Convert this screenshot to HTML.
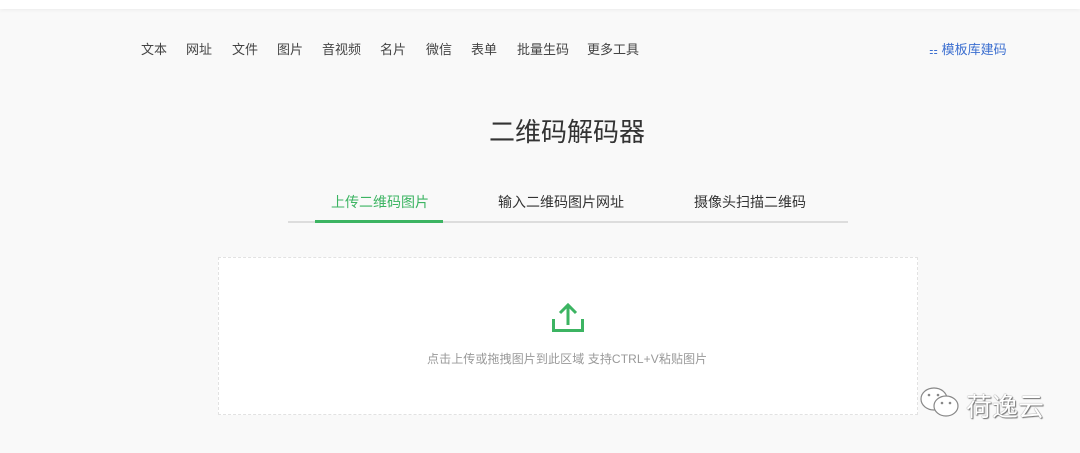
<!DOCTYPE html>
<html><head><meta charset="utf-8"><style>
*{margin:0;padding:0;box-sizing:border-box}
body{width:1080px;height:453px;background:#f9f9f9;font-family:"Liberation Sans","Noto Sans CJK SC",sans-serif;position:relative;overflow:hidden}
.top{position:absolute;left:0;top:0;width:1080px;height:9px;background:#fff;box-shadow:0 1px 4px rgba(0,0,0,.06)}
.n{position:absolute;top:39px;font-size:13px;color:#444;white-space:nowrap}
.tpl{position:absolute;top:39px;left:929px;font-size:13px;color:#3c6fd0}
h1{position:absolute;top:112px;left:489px;font-size:26px;font-weight:normal;color:#333;white-space:nowrap}
.tabs{position:absolute;left:288px;top:221px;width:560px;height:2px;background:#ddd}
.g{position:absolute;left:315px;top:220px;width:128px;height:3px;background:#3cb462}
.t{position:absolute;top:192px;font-size:14px;color:#333}
.box{position:absolute;left:218px;top:257px;width:700px;height:158px;background:#fff;border:1px dashed #e2e2e2}
.hint{position:absolute;top:350px;left:427px;font-size:12px;color:#999;letter-spacing:0.1px;white-space:nowrap}
.wm{position:absolute;left:966px;top:387px;font-size:26px;color:#fff;text-shadow:0 0 1px #555,1px 1px 1px #777}
</style></head><body>
<div class="top"></div>
<div class="n" style="left:141px">文本</div><div class="n" style="left:186px">网址</div><div class="n" style="left:232px">文件</div><div class="n" style="left:277px">图片</div><div class="n" style="left:322px">音视频</div><div class="n" style="left:380px">名片</div><div class="n" style="left:426px">微信</div><div class="n" style="left:471px">表单</div><div class="n" style="left:517px">批量生码</div><div class="n" style="left:587px">更多工具</div>
<div class="tpl"><span style="font-size:10px">⚏</span> 模板库建码</div>
<h1>二维码解码器</h1>
<div class="tabs"></div><div class="g"></div>
<div class="t" style="left:331px;color:#3cb462">上传二维码图片</div>
<div class="t" style="left:498px">输入二维码图片网址</div>
<div class="t" style="left:694px">摄像头扫描二维码</div>
<div class="box"></div>
<svg style="position:absolute;left:548px;top:300px" width="40" height="36"><g fill="none" stroke="#3cb462" stroke-width="3"><path d="M20 25V5M12 13l8-8 8 8"/><path d="M5.5 19v11.5h29V19"/></g></svg>
<div class="hint">点击上传或拖拽图片到此区域 支持CTRL+V粘贴图片</div>
<svg style="position:absolute;left:917px;top:385px" width="46" height="36"><g fill="#fff" stroke="#888" stroke-width="1.2"><ellipse cx="17" cy="14" rx="13" ry="11"/><ellipse cx="29" cy="21" rx="12" ry="10"/></g><g fill="#888"><circle cx="12" cy="10" r="1.3"/><circle cx="21" cy="10" r="1.3"/><circle cx="25" cy="18" r="1.3"/><circle cx="33" cy="18" r="1.3"/></g></svg>
<div class="wm">荷逸云</div>
</body></html>
